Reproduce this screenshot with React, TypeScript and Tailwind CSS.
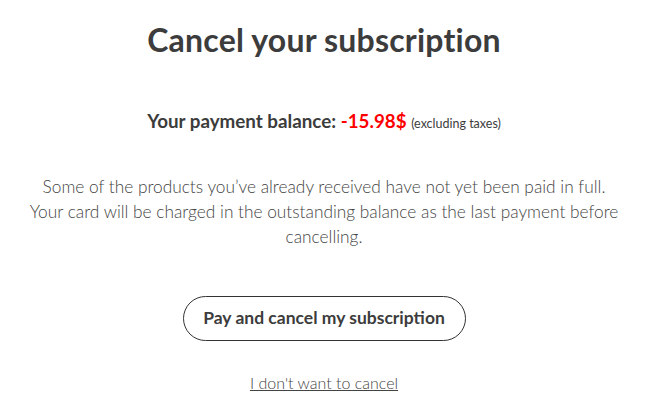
export default function App() {
  return (
    <div className="w-[667px] h-[414px] bg-white overflow-hidden">
      <div className="w-[648px] flex flex-col items-center text-[#3c3c3c] font-['Lato',sans-serif]">
        <h1 className="mt-[20px] text-[32px] leading-[40px] font-bold tracking-[0.2px]">Cancel your subscription</h1>
        <p className="mt-[49px] text-[18.8px] leading-[24px] font-bold">
          Your payment balance: <span className="text-[#ff0000]">-15.98$</span>{" "}
          <span className="text-[12.5px] font-normal">(excluding taxes)</span>
        </p>
        <p className="mt-[38px] w-[620px] text-center text-[17.3px] leading-[25px] font-light text-[#444]">
          Some of the products you’ve already received have not yet been paid in full.
          <br />
          Your card will be charged in the outstanding balance as the last payment before cancelling.
        </p>
        <button className="mt-[47px] w-[283px] h-[45px] rounded-full border border-[#333] text-[17.5px] font-bold text-[#3c3c3c]">
          Pay and cancel my subscription
        </button>
        <a className="mt-[31px] text-[16px] leading-[22px] font-light underline text-[#444]">I don't want to cancel</a>
      </div>
    </div>
  );
}
